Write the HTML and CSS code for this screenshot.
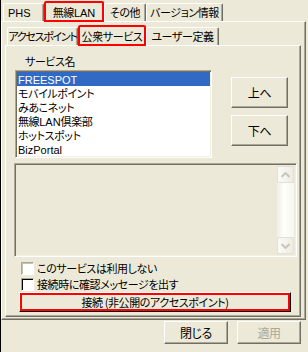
FILE: index.html
```html
<!DOCTYPE html>
<html lang="ja">
<head>
<meta charset="utf-8">
<link rel="stylesheet" href="styles.css">
</head>
<body>
<div class="dlg">
  <div class="tabs outer-tabs">
    <div class="tab w41 left"><span class="lat">PHS</span></div>
    <div class="tab sel mark w60">無線<span class="lat">LAN</span></div>
    <div class="tab w42">その他</div>
    <div class="tab w77">バージョン情報</div>
  </div>
  <div class="panel outer-panel">
    <div class="tabs inner-tabs">
      <div class="tab w71 tight">アクセスポイント</div>
      <div class="tab sel mark w68">公衆サービス</div>
      <div class="tab w73">ユーザー定義</div>
    </div>
    <div class="panel inner-panel">
      <div class="label">サービス名</div>
      <div class="row">
        <div class="listbox">
          <div class="item selected"><span class="lat">FREESPOT</span></div>
          <div class="item">モバイルポイント</div>
          <div class="item">みあこネット</div>
          <div class="item">無線<span class="lat">LAN</span>倶楽部</div>
          <div class="item">ホットスポット</div>
          <div class="item"><span class="lat">BizPortal</span></div>
        </div>
        <div class="side-btns">
          <div class="btn side">上へ</div>
          <div class="btn side">下へ</div>
        </div>
      </div>
      <div class="memo">
        <div class="vscroll">
          <div class="sarrow"><svg width="9" height="6" viewBox="0 0 9 6"><path d="M0.5 5 L4.5 1 L8.5 5" fill="none" stroke="#C9C7BA" stroke-width="2"/></svg></div>
          <div class="strack"></div>
          <div class="sarrow"><svg width="9" height="6" viewBox="0 0 9 6"><path d="M0.5 1 L4.5 5 L8.5 1" fill="none" stroke="#C9C7BA" stroke-width="2"/></svg></div>
        </div>
      </div>
      <div class="chk first"><span class="box box-light"></span><span>このサービスは利用しない</span></div>
      <div class="chk"><span class="box box-dark"></span><span>接続時に確認メッセージを出す</span></div>
      <div class="btn wide mark">接続 (非公開のアクセスポイント)</div>
    </div>
  </div>
  <div class="footer">
    <div class="btn foot">閉じる</div>
    <div class="btn foot disabled">適用</div>
  </div>
</div>
</body>
</html>
```

FILE: styles.css
```css
* { box-sizing: border-box; }
html, body { margin: 0; padding: 0; }
body {
  width: 308px;
  height: 352px;
  overflow: hidden;
  background: #ECE9D8;
  font-family: "Noto Sans CJK JP", sans-serif;
  font-size: 11px;
  letter-spacing: -0.4px;
  font-feature-settings: "palt";
  color: #000;
}
.lat { font-family: "Liberation Sans", sans-serif; font-size: 11px; letter-spacing: 0; font-feature-settings: normal; }
.dlg { width: 308px; height: 352px; display: flex; flex-direction: column; border-left: 1px solid #000; }

.tabs { display: flex; align-items: flex-end; height: 21px; flex: none; }
.outer-tabs { padding-left: 2px; }
.inner-tabs { padding-left: 5px; }
.tab {
  height: 18px;
  border-top: 1px solid #fff;
  border-left: 1px solid #fff;
  border-right: 1px solid #716F64;
  box-shadow: inset -1px 0 #ACA899;
  border-radius: 2px 2px 0 0;
  line-height: 17px;
  text-align: center;
  white-space: nowrap;
}
.tab.left { text-align: left; padding-left: 4px; }
.tab.tight { letter-spacing: -1.3px; }
.tab.sel {
  height: 21px;
  margin-bottom: -1px;
  background: #ECE9D8;
  position: relative;
  z-index: 1;
  line-height: 18px;
  padding-top: 1px;
}
.mark { outline: 2px solid #FF0000; outline-offset: -2px; }
.w41 { width: 41px; } .w60 { width: 60px; } .w42 { width: 42px; } .w77 { width: 77px; }
.w71 { width: 71px; } .w68 { width: 68px; } .w73 { width: 73px; }

.panel {
  border-top: 1px solid #fff;
  border-left: 1px solid #fff;
  border-right: 1px solid #716F64;
  border-bottom: 1px solid #716F64;
  box-shadow: inset -1px -1px #ACA899;
}
.outer-panel {
  width: 305px;
  height: 299px;
  padding-top: 2px;
  flex: none;
}
.inner-panel {
  margin-left: 3px;
  width: 296px;
  height: 272px;
  display: flex;
  flex-direction: column;
}
.label { margin: 8px 0 0 19px; line-height: 14px; }
.row { display: flex; margin-top: 2px; }
.listbox {
  margin-left: 9px;
  width: 197px;
  height: 88px;
  background: #fff;
  border-top: 1px solid #ACA899;
  border-left: 1px solid #ACA899;
  border-right: 1px solid #fff;
  border-bottom: 1px solid #fff;
  box-shadow: inset 1px 1px #716F64, inset -1px -1px #F1EFE2;
  padding: 1px;
}
.item { height: 14px; line-height: 14px; padding-left: 1px; white-space: nowrap; overflow: hidden; }
.item.selected { background: #316AC5; color: #fff; }
.side-btns { margin: 7px 0 0 19px; display: flex; flex-direction: column; gap: 7px; }

.btn {
  display: flex;
  align-items: center;
  justify-content: center;
  background: #ECE9D8;
  border-top: 1px solid #fff;
  border-left: 1px solid #fff;
  border-right: 1px solid #716F64;
  border-bottom: 1px solid #716F64;
  box-shadow: inset -1px -1px #ACA899;
  white-space: nowrap;
}
.btn.side { width: 57px; height: 31px; font-size: 12px; }
.btn.wide { margin: 0 0 0 13px; width: 272px; height: 20px; border-right-color: #000; border-bottom-color: #000; outline-offset: -3px; }
.btn.foot { width: 64px; height: 23px; font-size: 12px; }
.btn.disabled { color: #ACA899; }

.memo {
  margin: 5px 0 0 8px;
  width: 283px;
  height: 94px;
  border-top: 1px solid #ACA899;
  border-left: 1px solid #ACA899;
  border-right: 1px solid #fff;
  border-bottom: 1px solid #fff;
  box-shadow: inset 1px 1px #716F64, inset -1px -1px #F1EFE2;
  padding: 2px;
  display: flex;
  justify-content: flex-end;
}
.vscroll { width: 17px; display: flex; flex-direction: column; }
.sarrow {
  height: 17px;
  border: 1px solid #E3E1D6;
  border-radius: 2px;
  background: linear-gradient(to right, #FBFBF8, #EDEBE3);
  display: flex;
  align-items: center;
  justify-content: center;
}
.strack { flex: 1; background: linear-gradient(to right, #F0EEE6, #FEFEFB 40%, #F7F6F1); }

.chk { display: flex; align-items: center; height: 16px; margin-left: 15px; }
.chk.first { margin-top: 3px; }
.box { width: 13px; height: 13px; background: #fff; margin-right: 3px; flex: none; }
.box-light { border-top: 1px solid #ACA899; border-left: 1px solid #ACA899; border-right: 1px solid #fff; border-bottom: 1px solid #fff; box-shadow: inset 1px 1px #C5C2B2; }
.box-dark { border-top: 1px solid #ACA899; border-left: 1px solid #ACA899; border-right: 1px solid #fff; border-bottom: 1px solid #fff; box-shadow: inset 1px 1px #000; }

.footer { display: flex; justify-content: flex-end; gap: 9px; padding: 1px 7px 0 0; }
```
